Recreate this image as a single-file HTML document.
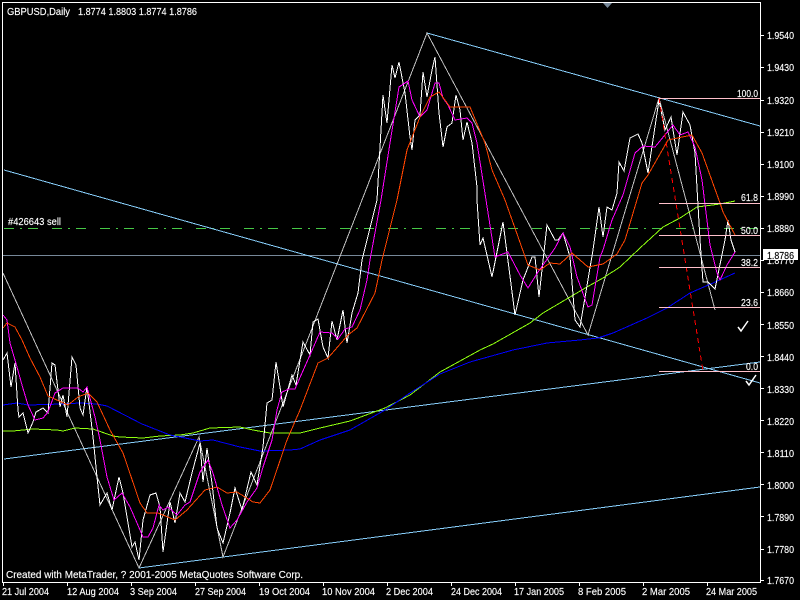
<!DOCTYPE html>
<html>
<head>
<meta charset="utf-8">
<style>
html,body{margin:0;padding:0;background:#000;width:800px;height:600px;overflow:hidden}
svg{display:block}
text{font-family:"Liberation Sans",sans-serif;font-size:10.5px;fill:#fff;stroke:#fff;stroke-width:.15px}
.l{fill:none;shape-rendering:crispEdges;stroke-width:1}
</style>
</head>
<body>
<svg width="800" height="600" viewBox="0 0 800 600" xmlns="http://www.w3.org/2000/svg">
<rect width="800" height="600" fill="#000"/>

<!-- order lines -->
<line class="l" x1="4" y1="228.5" x2="760" y2="228.5" stroke="#46C846" stroke-dasharray="10 6 2 6 10 14"/>
<line class="l" x1="3" y1="255.5" x2="760" y2="255.5" stroke="#778899"/>

<!-- trend lines -->
<g class="l" stroke="#87CEFA">
<line x1="4" y1="170" x2="760" y2="383"/>
<line x1="427" y1="33" x2="760" y2="126"/>
<line x1="4" y1="459" x2="760" y2="362"/>
<line x1="139" y1="568" x2="760" y2="487"/>
</g>

<!-- zigzag -->
<polyline class="l" stroke="#C0C0C0" points="3,273 139,568 199,437 223,557 427,33 588,335 659,98 715,310"/>

<!-- green MA -->
<polyline class="l" stroke="#8FFF10" points="3,431 13,431 33,429 57,430 63,431 75,428 93,429 113,436 120,437 143,438 160,436 180,435 193,433 210,428 240,427 253,430 270,433 300,433 320,428 350,421 385,408 410,395 440,372 480,350 493,344 530,323 543,313 587,287 603,278 620,267 640,248 663,227 680,218 697,207 720,204 735,201"/>

<!-- blue MA -->
<polyline class="l" stroke="#0000FF" points="3,405 17,403 28,405 62,404 80,403 97,404 107,406 142,424 170,435 200,441 213,440 240,447 260,451 290,450 300,449 320,440 350,430 385,410 410,393 440,374 470,362 513,350 547,343 580,340 598,338 613,333 647,318 667,308 690,293 713,283 735,273"/>

<!-- white price -->
<polyline class="l" stroke="#FFFFFF" points="3,360 7,353 11,387 15,363 18,410 19,417 23,413 28,433 33,422 36,412 43,408 48,413 52,363 55,365 60,407 63,395 67,417 72,357 76,365 80,408 83,415 87,387 91,420 93,437 97,477 100,505 107,493 112,510 119,477 123,493 132,547 135,542 139,560 143,520 150,495 156,493 160,507 163,552 170,502 175,523 180,493 185,502 192,473 200,443 203,482 207,448 212,483 217,528 223,543 230,513 235,488 242,510 251,472 257,485 263,447 267,403 272,400 276,362 280,387 283,407 292,375 296,385 303,342 310,355 313,322 318,319 323,347 328,358 332,321 337,340 343,310 347,343 352,313 358,293 362,260 377,200 381,130 383,95 387,123 392,65 395,78 399,62 405,93 410,137 412,150 415,120 420,115 423,72 427,97 432,70 435,57 439,113 443,147 447,127 452,123 456,95 460,110 463,140 467,122 472,143 477,187 477,200 480,245 483,238 492,277 503,222 515,315 523,280 532,257 535,257 539,297 547,225 555,240 558,240 563,233 570,257 575,320 580,327 593,250 599,207 603,237 607,207 612,210 617,193 619,162 624,171 630,138 638,134 642,143 648,173 659,100 665,130 671,117 677,155 683,112 690,125 695,153 700,240 703,282 708,282 715,289 725,240 728,220 731,240 735,252"/>

<!-- magenta -->
<polyline class="l" stroke="#FF00FF" points="3,315 7,320 10,343 17,367 22,385 28,405 35,420 43,418 48,412 55,393 63,388 78,388 83,392 87,387 95,417 100,440 107,477 114,500 122,493 130,507 137,523 143,537 148,537 153,528 159,505 163,510 168,507 177,515 185,505 190,502 200,472 208,460 213,473 222,505 230,528 237,520 247,502 257,488 263,467 272,440 277,410 282,392 289,389 295,389 302,373 310,355 320,332 332,333 338,339 345,329 352,327 360,310 367,280 370,260 381,200 390,143 399,87 408,81 412,100 420,117 427,110 435,83 439,83 443,98 448,105 455,120 467,118 472,123 477,143 486,200 495,257 508,252 520,275 528,288 538,272 548,258 555,248 563,233 570,247 577,277 588,307 592,305 600,257 603,250 612,220 623,195 635,153 643,146 655,147 673,125 680,135 688,132 695,147 702,180 710,245 717,273 720,280 727,265 735,252"/>

<!-- orange -->
<polyline class="l" stroke="#FF4500" points="3,328 7,323 15,327 22,340 30,358 40,377 48,396 68,405 78,397 88,393 97,402 110,430 123,453 140,503 147,513 158,513 175,520 187,510 205,490 217,487 227,493 237,492 253,502 260,503 270,490 287,440 300,410 318,363 328,358 348,335 357,328 375,293 382,260 397,200 407,150 420,117 430,97 439,92 450,107 470,107 485,143 492,170 505,200 528,265 540,270 550,263 560,264 572,253 588,267 603,264 617,254 625,240 642,183 648,175 668,140 692,135 702,153 720,203 723,212 735,235"/>

<!-- red dashed -->
<line class="l" x1="659" y1="98" x2="703" y2="371" stroke="#FF0000" stroke-dasharray="5 4"/>

<!-- fibo lines -->
<g class="l" stroke="#FFC0CB">
<line x1="659" y1="98.5" x2="760" y2="98.5"/>
<line x1="659" y1="203.5" x2="760" y2="203.5"/>
<line x1="659" y1="235.5" x2="760" y2="235.5"/>
<line x1="659" y1="267.5" x2="760" y2="267.5"/>
<line x1="659" y1="307.5" x2="760" y2="307.5"/>
<line x1="659" y1="371.5" x2="760" y2="371.5"/>
</g>
<text x="737" y="97" textLength="21" lengthAdjust="spacingAndGlyphs">100.0</text>
<text x="741" y="201" textLength="17" lengthAdjust="spacingAndGlyphs">61.8</text>
<text x="741" y="234" textLength="17" lengthAdjust="spacingAndGlyphs">50.0</text>
<text x="741" y="266" textLength="17" lengthAdjust="spacingAndGlyphs">38.2</text>
<text x="741" y="306" textLength="17" lengthAdjust="spacingAndGlyphs">23.6</text>
<text x="746" y="370" textLength="12" lengthAdjust="spacingAndGlyphs">0.0</text>

<!-- checkmarks -->
<polyline points="738,327 741,331 748,321" fill="none" stroke="#fff" stroke-width="1.5"/>
<polyline points="746,381 749,385 756,375" fill="none" stroke="#fff" stroke-width="1.5"/>

<!-- frame -->
<rect x="2.5" y="2.5" width="758" height="580" fill="none" stroke="#fff" stroke-width="1" shape-rendering="crispEdges"/>

<!-- top triangle -->
<polygon points="603,3 612,3 607.5,8" fill="#778899"/>

<!-- y ticks -->
<g class="l" stroke="#fff">
<line x1="761" y1="35.5" x2="764" y2="35.5"/>
<line x1="761" y1="67.5" x2="764" y2="67.5"/>
<line x1="761" y1="100.5" x2="764" y2="100.5"/>
<line x1="761" y1="132.5" x2="764" y2="132.5"/>
<line x1="761" y1="164.5" x2="764" y2="164.5"/>
<line x1="761" y1="196.5" x2="764" y2="196.5"/>
<line x1="761" y1="228.5" x2="764" y2="228.5"/>
<line x1="761" y1="260.5" x2="764" y2="260.5"/>
<line x1="761" y1="292.5" x2="764" y2="292.5"/>
<line x1="761" y1="324.5" x2="764" y2="324.5"/>
<line x1="761" y1="356.5" x2="764" y2="356.5"/>
<line x1="761" y1="388.5" x2="764" y2="388.5"/>
<line x1="761" y1="420.5" x2="764" y2="420.5"/>
<line x1="761" y1="452.5" x2="764" y2="452.5"/>
<line x1="761" y1="484.5" x2="764" y2="484.5"/>
<line x1="761" y1="516.5" x2="764" y2="516.5"/>
<line x1="761" y1="549.5" x2="764" y2="549.5"/>
<line x1="761" y1="580.5" x2="764" y2="580.5"/>
</g>

<!-- y labels -->
<g>
<text x="767" y="39" textLength="27" lengthAdjust="spacingAndGlyphs">1.9540</text>
<text x="767" y="71" textLength="27" lengthAdjust="spacingAndGlyphs">1.9430</text>
<text x="767" y="104" textLength="27" lengthAdjust="spacingAndGlyphs">1.9320</text>
<text x="767" y="136" textLength="27" lengthAdjust="spacingAndGlyphs">1.9210</text>
<text x="767" y="168" textLength="27" lengthAdjust="spacingAndGlyphs">1.9100</text>
<text x="767" y="200" textLength="27" lengthAdjust="spacingAndGlyphs">1.8990</text>
<text x="767" y="232" textLength="27" lengthAdjust="spacingAndGlyphs">1.8880</text>
<text x="767" y="264" textLength="27" lengthAdjust="spacingAndGlyphs">1.8770</text>
<text x="767" y="296" textLength="27" lengthAdjust="spacingAndGlyphs">1.8660</text>
<text x="767" y="329" textLength="27" lengthAdjust="spacingAndGlyphs">1.8550</text>
<text x="767" y="361" textLength="27" lengthAdjust="spacingAndGlyphs">1.8440</text>
<text x="767" y="393" textLength="27" lengthAdjust="spacingAndGlyphs">1.8330</text>
<text x="767" y="425" textLength="27" lengthAdjust="spacingAndGlyphs">1.8220</text>
<text x="767" y="457" textLength="27" lengthAdjust="spacingAndGlyphs">1.8110</text>
<text x="767" y="489" textLength="27" lengthAdjust="spacingAndGlyphs">1.8000</text>
<text x="767" y="521" textLength="27" lengthAdjust="spacingAndGlyphs">1.7890</text>
<text x="767" y="553" textLength="27" lengthAdjust="spacingAndGlyphs">1.7780</text>
<text x="767" y="584" textLength="27" lengthAdjust="spacingAndGlyphs">1.7670</text>
</g>

<!-- current price box -->
<rect x="763" y="249" width="35" height="11" fill="#fff"/>
<text x="767" y="259" textLength="27" lengthAdjust="spacingAndGlyphs" style="fill:#000;stroke:#000">1.8786</text>

<!-- x ticks -->
<g class="l" stroke="#fff">
<line x1="3.5" y1="583" x2="3.5" y2="586"/>
<line x1="67.5" y1="583" x2="67.5" y2="586"/>
<line x1="131.5" y1="583" x2="131.5" y2="586"/>
<line x1="195.5" y1="583" x2="195.5" y2="586"/>
<line x1="259.5" y1="583" x2="259.5" y2="586"/>
<line x1="323.5" y1="583" x2="323.5" y2="586"/>
<line x1="387.5" y1="583" x2="387.5" y2="586"/>
<line x1="451.5" y1="583" x2="451.5" y2="586"/>
<line x1="515.5" y1="583" x2="515.5" y2="586"/>
<line x1="579.5" y1="583" x2="579.5" y2="586"/>
<line x1="643.5" y1="583" x2="643.5" y2="586"/>
<line x1="707.5" y1="583" x2="707.5" y2="586"/>
</g>

<!-- x labels -->
<g>
<text x="2" y="595" textLength="47" lengthAdjust="spacingAndGlyphs">21 Jul 2004</text>
<text x="67" y="595" textLength="52" lengthAdjust="spacingAndGlyphs">12 Aug 2004</text>
<text x="130" y="595" textLength="47" lengthAdjust="spacingAndGlyphs">3 Sep 2004</text>
<text x="195" y="595" textLength="51" lengthAdjust="spacingAndGlyphs">27 Sep 2004</text>
<text x="259" y="595" textLength="51" lengthAdjust="spacingAndGlyphs">19 Oct 2004</text>
<text x="322" y="595" textLength="53" lengthAdjust="spacingAndGlyphs">10 Nov 2004</text>
<text x="386" y="595" textLength="47" lengthAdjust="spacingAndGlyphs">2 Dec 2004</text>
<text x="451" y="595" textLength="51" lengthAdjust="spacingAndGlyphs">24 Dec 2004</text>
<text x="514" y="595" textLength="50" lengthAdjust="spacingAndGlyphs">17 Jan 2005</text>
<text x="578" y="595" textLength="48" lengthAdjust="spacingAndGlyphs">8 Feb 2005</text>
<text x="642" y="595" textLength="48" lengthAdjust="spacingAndGlyphs">2 Mar 2005</text>
<text x="706" y="595" textLength="51" lengthAdjust="spacingAndGlyphs">24 Mar 2005</text>
</g>

<!-- headers / captions -->
<text x="7" y="15" textLength="63" lengthAdjust="spacingAndGlyphs">GBPUSD,Daily</text>
<text x="78" y="15" textLength="119" lengthAdjust="spacingAndGlyphs">1.8774 1.8803 1.8774 1.8786</text>
<text x="8" y="225" textLength="53" lengthAdjust="spacingAndGlyphs">#426643 sell</text>
<text x="6" y="578" textLength="297" lengthAdjust="spacingAndGlyphs">Created with MetaTrader, ? 2001-2005 MetaQuotes Software Corp.</text>
</svg>
</body>
</html>
